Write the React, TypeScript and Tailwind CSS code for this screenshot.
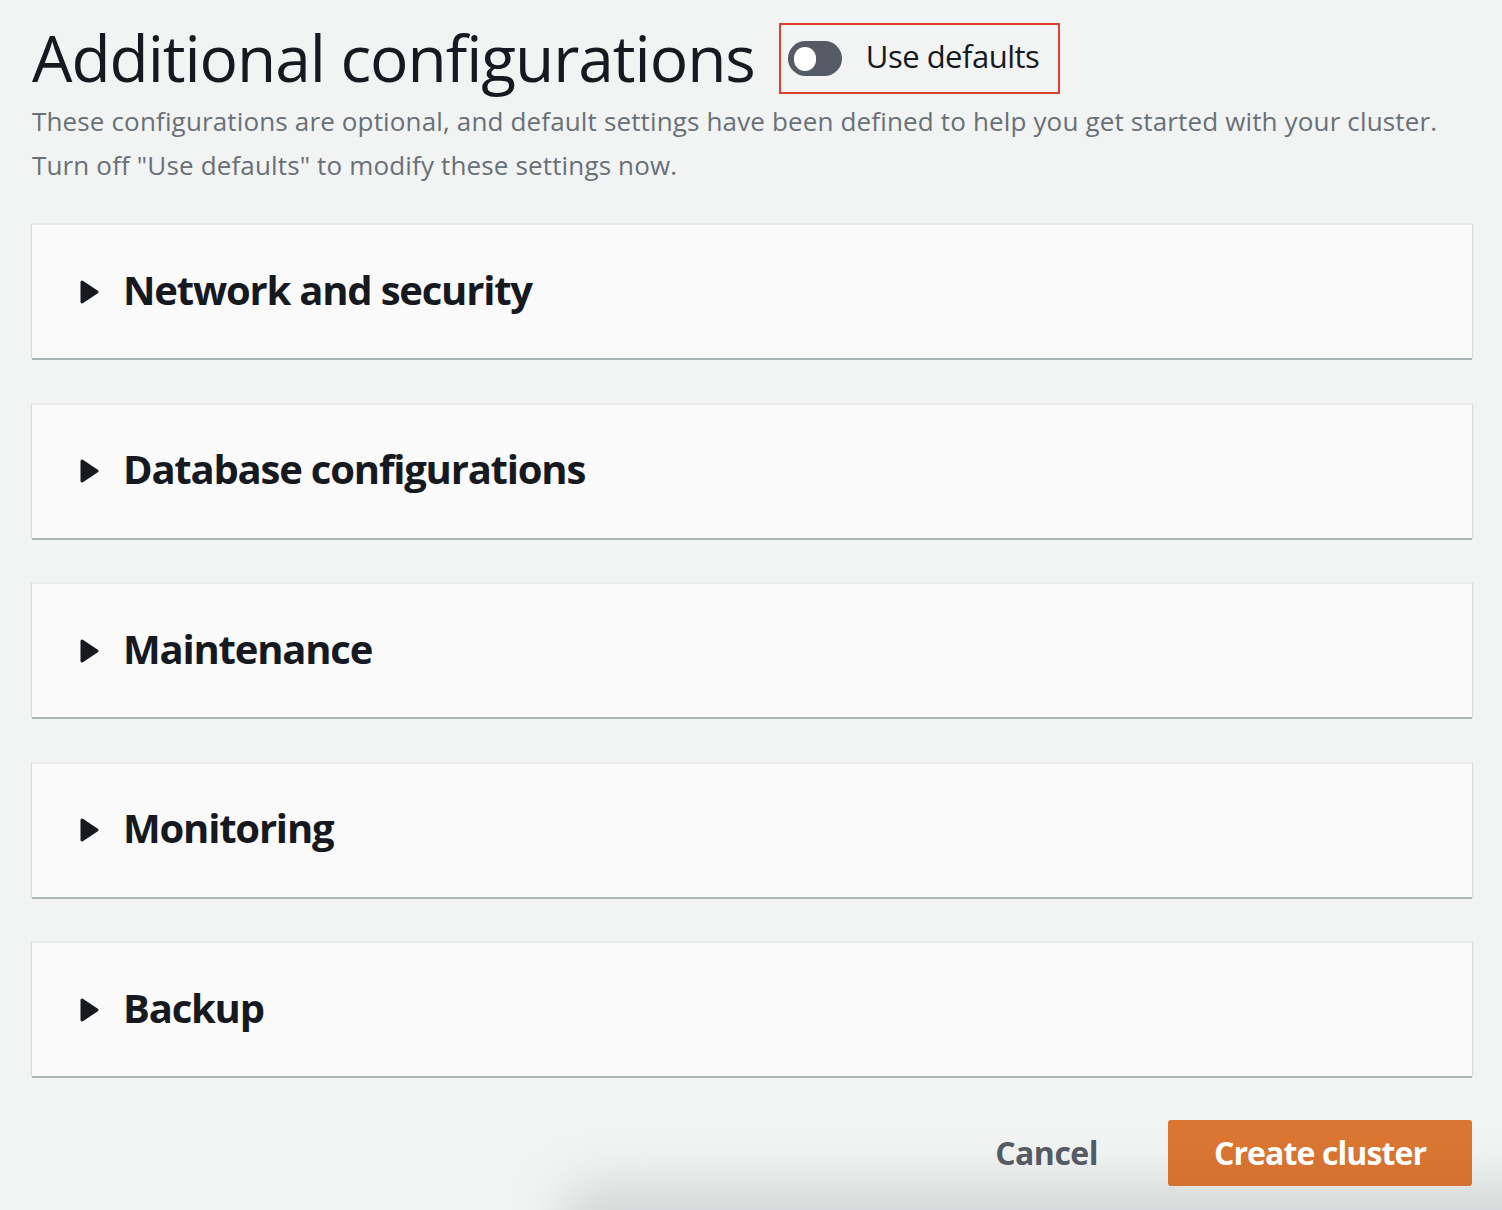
import { useState } from "react";

const sections = ["Network and security", "Database configurations", "Maintenance", "Monitoring", "Backup"];

const Caret = () => (
  <svg width="19" height="24" viewBox="0 0 19 24" className="shrink-0">
    <path d="M2 2 L17 12 L2 22 Z" fill="#16191f" stroke="#16191f" strokeWidth="3" strokeLinejoin="round" />
  </svg>
);

const Section = ({ title }: { title: string }) => (
  <div className="h-[134px] bg-[#fafafa] border-t border-[#eaeded] shadow-[0_2px_0_0_#aab7b8,1px_0_1px_0_#d5dbdb,-1px_0_1px_0_#d5dbdb] flex items-center pl-[48px] gap-[24px]">
    <Caret />
    <h2 className="text-[40px] font-bold text-[#16191f] tracking-[-1.2px] leading-none pb-1">{title}</h2>
  </div>
);

export default function App() {
  const [defaults, setDefaults] = useState(false);
  return (
    <div
      className="min-h-[1210px] w-[1502px] bg-[#f2f3f3] px-[32px] pt-[22px] relative overflow-hidden"
      style={{ fontFamily: '"Open Sans", "Noto Sans", sans-serif' }}
    >
      <div className="flex items-center gap-[24px]">
        <h1 className="text-[64px] leading-[72px] text-[#16191f] tracking-[-1.05px]">Additional configurations</h1>
        <div className="border-2 border-[#e0412f] h-[71px] w-[281px] flex items-center pl-[7px] gap-[24px] mt-[1px]">
          <button
            onClick={() => setDefaults(!defaults)}
            className="w-[54px] h-[35px] rounded-full bg-[#545b64] flex items-center px-[6px]"
          >
            <span className="w-[22px] h-[24px] rounded-full bg-white block" />
          </button>
          <span className="text-[31px] text-[#16191f] tracking-[-0.5px] pb-1">Use defaults</span>
        </div>
      </div>
      <p className="text-[26px] leading-[44px] text-[#687078] tracking-[0.15px] mt-[5px]">
        These configurations are optional, and default settings have been defined to help you get started with your cluster.
        <br />
        Turn off "Use defaults" to modify these settings now.
      </p>
      <div className="flex flex-col gap-[45.5px] mt-[37px] w-[1440px]">
        {sections.map((s) => (
          <Section key={s} title={s} />
        ))}
      </div>
      <div className="flex justify-end items-center mt-[44px] w-[1440px] gap-[70px] relative z-10">
        <button className="text-[32px] font-bold text-[#545b64] tracking-[-0.5px]">Cancel</button>
        <button className="w-[304px] h-[66px] rounded-[3px] bg-gradient-to-b from-[#dc7733] to-[#d5712f] text-white text-[32px] font-bold tracking-[-0.9px]">
          Create cluster
        </button>
      </div>
      <div className="absolute left-[560px] right-[-60px] bottom-[-50px] h-[76px] rounded-full bg-[#d3d6d6] blur-[24px]" />
    </div>
  );
}
